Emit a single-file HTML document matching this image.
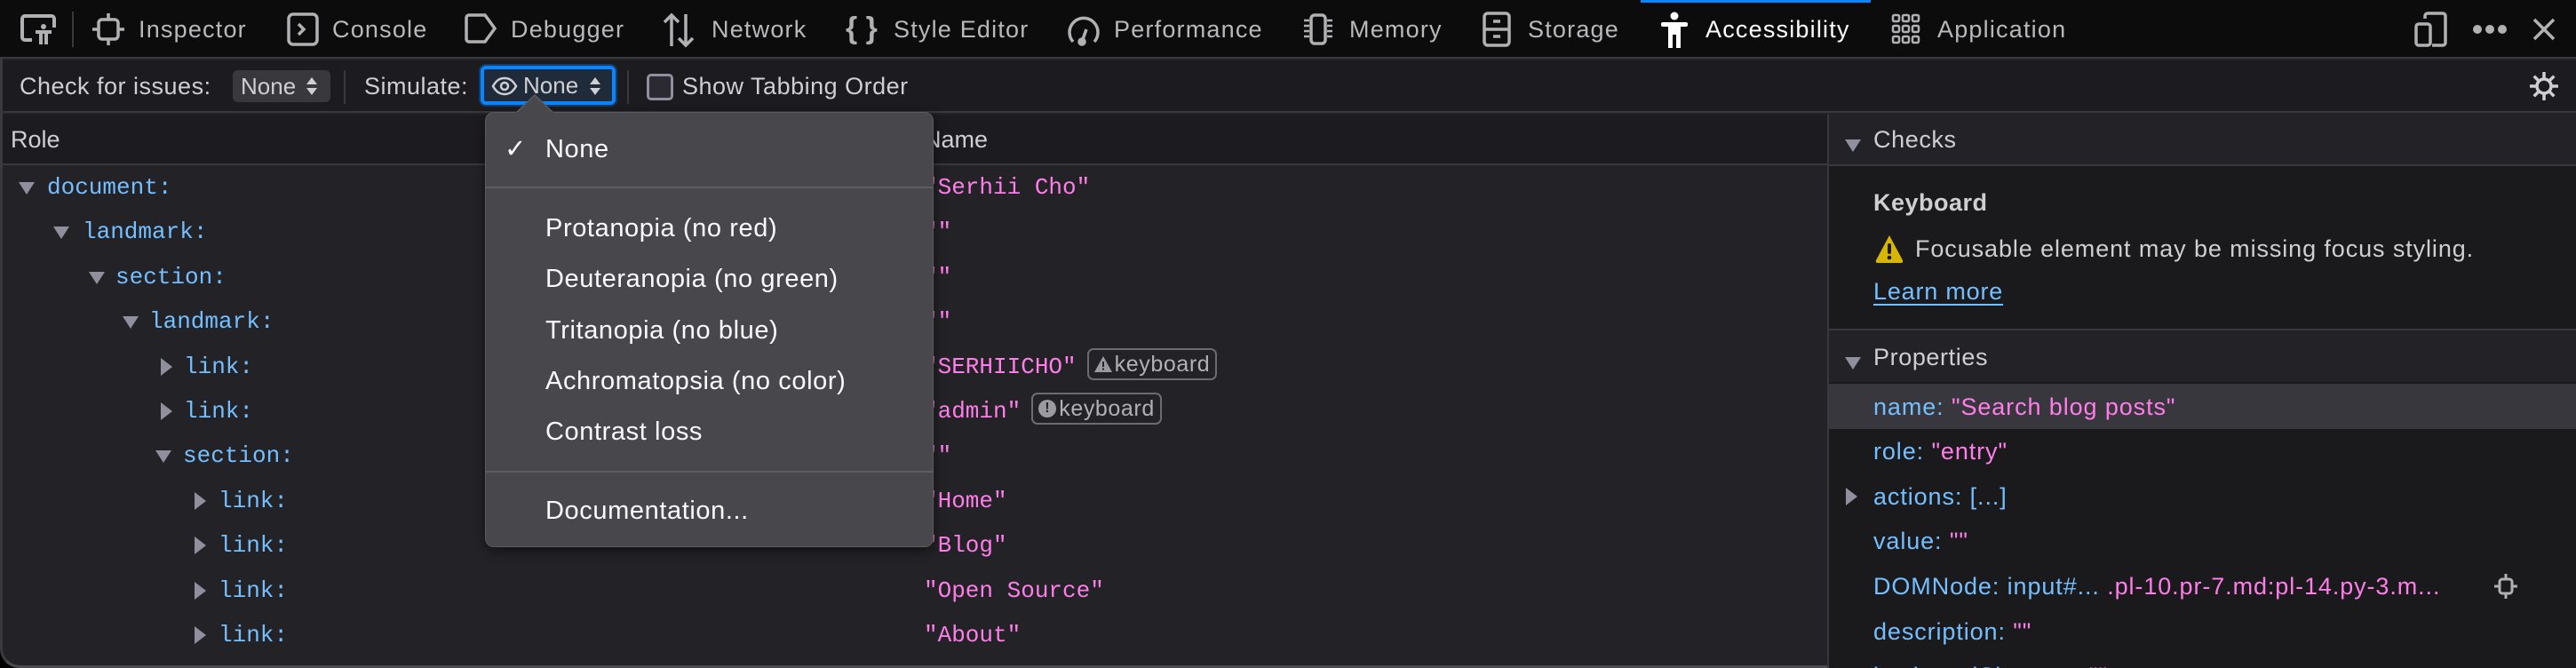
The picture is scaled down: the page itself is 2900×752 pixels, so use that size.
<!DOCTYPE html>
<html><head><meta charset="utf-8"><style>
*{margin:0;padding:0;box-sizing:border-box}
html,body{width:2900px;height:752px;overflow:hidden;background:#000}
body{position:relative;font-family:"Liberation Sans",sans-serif;color:#b1b1b3}
.a{position:absolute;white-space:nowrap}
.t{font-size:27px;letter-spacing:1.2px;line-height:66px;top:0;color:#b9b9bc}
.ic{position:absolute}
.mono{font-family:"Liberation Mono",monospace;font-size:26px}
.blue{color:#75bfff}.pink{color:#ff7de9}
.row{position:absolute;height:50px;line-height:50px;white-space:nowrap}
.dn{position:absolute;width:0;height:0;border-left:9px solid transparent;border-right:9px solid transparent;border-top:14px solid #8f8f9d;margin-top:19px}
.rt{position:absolute;width:0;height:0;border-top:10px solid transparent;border-bottom:10px solid transparent;border-left:13px solid #8f8f9d;margin-top:15px}
.badge{display:inline-block;border:2px solid #6b6b70;border-radius:7px;height:36px;line-height:32px;padding:0 6px 0 6px;font-family:"Liberation Sans",sans-serif;font-size:25px;letter-spacing:0.6px;color:#b1b1b3;vertical-align:middle;margin-left:12px;position:relative;top:-3px}
.mi{position:absolute;left:614px;font-size:29px;letter-spacing:0.6px;color:#fbfbfe;line-height:40px}
.pr{position:absolute;left:2109px;font-size:27px;letter-spacing:0.9px;line-height:50px;white-space:nowrap}
</style></head><body>
<div class="a" style="left:0;top:0;width:2900px;height:752px;background:#232327;border-left:3px solid #3a3a3e;border-bottom:3px solid #4a4a4f;border-radius:0 0 22px 22px;overflow:hidden">
</div>
<!-- tab bar -->
<div class="a" style="left:0;top:0;width:2900px;height:66px;background:#0c0c0d;border-bottom:2px solid #38383d"></div>
<div class="a" style="left:1847px;top:0;width:259px;height:3px;background:#0a84ff"></div>
<svg class="ic" style="left:22px;top:15px" width="42" height="36" viewBox="0 0 42 36" fill="none" stroke="#b1b1b3" stroke-width="4"><path d="M14 30H6a3 3 0 0 1-3-3V6a3 3 0 0 1 3-3h30a3 3 0 0 1 3 3v10"/><circle cx="27" cy="15" r="3" fill="#b1b1b3" stroke="none"/><path d="M18 21h18M24 21v14M30 21v14" stroke-width="4"/></svg>
<div class="a" style="left:81px;top:13px;width:2px;height:40px;background:#38383d"></div>
<svg class="ic" style="left:102px;top:13px" width="40" height="40" viewBox="0 0 40 40" fill="none" stroke="#b1b1b3" stroke-width="3.5"><rect x="9" y="9" width="22" height="22" rx="4"/><path d="M20 2v7M20 31v7M2 20h7M31 20h7"/></svg>
<div class="a t" style="left:156px">Inspector</div>
<svg class="ic" style="left:323px;top:14px" width="36" height="38" viewBox="0 0 36 38" fill="none" stroke="#b1b1b3" stroke-width="3.5"><rect x="2" y="2" width="32" height="34" rx="5"/><path d="M13 13l6 6-6 6"/></svg>
<div class="a t" style="left:374px">Console</div>
<svg class="ic" style="left:522px;top:15px" width="38" height="34" viewBox="0 0 38 34" fill="none" stroke="#b1b1b3" stroke-width="3.5"><path d="M3 5a3 3 0 0 1 3-3h18l11 15-11 15H6a3 3 0 0 1-3-3z"/></svg>
<div class="a t" style="left:575px">Debugger</div>
<svg class="ic" style="left:746px;top:14px" width="36" height="40" viewBox="0 0 36 40" fill="none" stroke="#b1b1b3" stroke-width="3.5"><path d="M10 38V3M2 11l8-8 8 8M26 2v35M18 29l8 8 8-8"/></svg>
<div class="a t" style="left:801px">Network</div>
<div class="a" style="left:952px;top:0;line-height:64px;font-size:34px;color:#b1b1b3;font-weight:bold">{ }</div>
<div class="a t" style="left:1006px">Style Editor</div>
<svg class="ic" style="left:1200px;top:13px" width="40" height="40" viewBox="0 0 40 40" fill="none" stroke="#b1b1b3" stroke-width="3.5"><path d="M8 34A16 16 0 1 1 32 34"/><path d="M18 34l5-14"/><circle cx="18" cy="34" r="3" fill="#b1b1b3"/></svg>
<div class="a t" style="left:1254px">Performance</div>
<svg class="ic" style="left:1465px;top:14px" width="38" height="38" viewBox="0 0 38 38" fill="none" stroke="#b1b1b3" stroke-width="3.5"><rect x="11" y="3" width="16" height="32" rx="4"/><path d="M3 9h6M3 15h6M3 21h6M3 27h6M29 9h6M29 15h6M29 21h6M29 27h6" stroke-width="2.5"/></svg>
<div class="a t" style="left:1519px">Memory</div>
<svg class="ic" style="left:1668px;top:13px" width="34" height="40" viewBox="0 0 34 40" fill="none" stroke="#b1b1b3" stroke-width="3.5"><rect x="3" y="2" width="28" height="36" rx="4"/><path d="M3 20h28M13 11h8M13 28h8"/></svg>
<div class="a t" style="left:1720px">Storage</div>
<svg class="ic" style="left:1868px;top:13px" width="34" height="42" viewBox="0 0 34 42" fill="#fff"><circle cx="17" cy="5" r="4.5"/><rect x="2" y="12" width="30" height="5" rx="2"/><rect x="10" y="12" width="14" height="14"/><rect x="10" y="24" width="5" height="17"/><rect x="19" y="24" width="5" height="17"/></svg>
<div class="a t" style="left:1920px;color:#fff">Accessibility</div>
<svg class="ic" style="left:2129px;top:15px" width="34" height="36" viewBox="0 0 34 36" fill="none" stroke="#b1b1b3" stroke-width="2.5"><rect x="2" y="2" width="7" height="7" rx="1.5"/><rect x="13" y="2" width="7" height="7" rx="1.5"/><rect x="24" y="2" width="7" height="7" rx="1.5"/><rect x="2" y="14" width="7" height="7" rx="1.5"/><rect x="13" y="14" width="7" height="7" rx="1.5"/><rect x="24" y="14" width="7" height="7" rx="1.5"/><rect x="2" y="26" width="7" height="7" rx="1.5"/><rect x="13" y="26" width="7" height="7" rx="1.5"/><rect x="24" y="26" width="7" height="7" rx="1.5"/></svg>
<div class="a t" style="left:2181px">Application</div>
<svg class="ic" style="left:2718px;top:13px" width="38" height="40" viewBox="0 0 38 40" fill="none" stroke="#b1b1b3" stroke-width="3.5"><path d="M12 8V5a3 3 0 0 1 3-3h17a3 3 0 0 1 3 3v30a3 3 0 0 1-3 3H20"/><rect x="2" y="14" width="16" height="24" rx="3"/></svg>
<svg class="ic" style="left:2783px;top:27px" width="40" height="12" viewBox="0 0 40 12" fill="#b1b1b3"><circle cx="6" cy="6" r="5"/><circle cx="20" cy="6" r="5"/><circle cx="34" cy="6" r="5"/></svg>
<svg class="ic" style="left:2850px;top:19px" width="28" height="28" viewBox="0 0 28 28" stroke="#b1b1b3" stroke-width="3.5"><path d="M3 3l22 22M25 3L3 25"/></svg>

<!-- toolbar -->
<div class="a" style="left:3px;top:68px;width:2897px;height:59px;background:#1c1b1f;border-bottom:2px solid #38383d"></div>
<div class="a" style="left:22px;top:68px;line-height:58px;font-size:27px;letter-spacing:0.5px;color:#cfcfd2">Check for issues:</div>
<div class="a" style="left:262px;top:79px;width:110px;height:36px;background:#38383d;border-radius:6px;font-size:26px;line-height:36px;padding-left:9px;color:#cfcfd2">None</div>
<svg class="ic" style="left:344px;top:86px" width="14" height="22" viewBox="0 0 14 22" fill="#cfcfd2"><path d="M7 1l6 8H1zM7 21l6-8H1z"/></svg>
<div class="a" style="left:387px;top:79px;width:2px;height:38px;background:#38383d"></div>
<div class="a" style="left:410px;top:68px;line-height:58px;font-size:27px;letter-spacing:0.5px;color:#cfcfd2">Simulate:</div>
<div class="a" style="left:541px;top:74px;width:152px;height:44px;border:4px solid #0a84ff;border-radius:6px;background:#1f2a3a;box-shadow:0 0 0 2px #153b66"></div>
<svg class="ic" style="left:553px;top:86px" width="30" height="22" viewBox="0 0 30 22" fill="none" stroke="#cfcfd2" stroke-width="2.5"><path d="M2 11C6 4 10 2 15 2s9 2 13 9c-4 7-8 9-13 9S6 18 2 11z"/><circle cx="15" cy="11" r="4"/></svg>
<div class="a" style="left:589px;top:78px;line-height:36px;font-size:26px;color:#cfcfd2">None</div>
<svg class="ic" style="left:663px;top:86px" width="14" height="22" viewBox="0 0 14 22" fill="#cfcfd2"><path d="M7 1l6 8H1zM7 21l6-8H1z"/></svg>
<div class="a" style="left:706px;top:79px;width:2px;height:38px;background:#38383d"></div>
<div class="a" style="left:728px;top:83px;width:30px;height:30px;border:3px solid #8f8f9d;border-radius:5px;background:#2b2a33"></div>
<div class="a" style="left:768px;top:68px;line-height:58px;font-size:27px;letter-spacing:0.5px;color:#cfcfd2">Show Tabbing Order</div>
<svg class="ic" style="left:2846px;top:79px" width="36" height="36" viewBox="0 0 36 36" fill="none" stroke="#cfcfd2" stroke-width="3.5"><circle cx="18" cy="18" r="8"/><path d="M18 2v7M18 27v7M2 18h7M27 18h7M6.7 6.7l5 5M24.3 24.3l5 5M6.7 29.3l5-5M24.3 11.7l5-5"/></svg>

<!-- header row -->
<div class="a" style="left:3px;top:129px;width:2054px;height:57px;background:#1c1b1f;border-bottom:2px solid #38383d"></div>
<div class="a" style="left:12px;top:129px;line-height:56px;font-size:27px;color:#cfcfd2">Role</div>
<div class="a" style="left:1040px;top:129px;line-height:56px;font-size:27px;color:#cfcfd2">Name</div>

<!-- tree rows -->
<div class="dn" style="top:186px;left:21px"></div><div class="row mono blue" style="top:186px;left:53px">document:</div>
<div class="dn" style="top:236px;left:60px"></div><div class="row mono blue" style="top:236px;left:93px">landmark:</div>
<div class="dn" style="top:287px;left:100px"></div><div class="row mono blue" style="top:287px;left:130px">section:</div>
<div class="dn" style="top:337px;left:138px"></div><div class="row mono blue" style="top:337px;left:168px">landmark:</div>
<div class="rt" style="top:388px;left:181px"></div><div class="row mono blue" style="top:388px;left:207px">link:</div>
<div class="rt" style="top:438px;left:181px"></div><div class="row mono blue" style="top:438px;left:207px">link:</div>
<div class="dn" style="top:488px;left:175px"></div><div class="row mono blue" style="top:488px;left:206px">section:</div>
<div class="rt" style="top:539px;left:219px"></div><div class="row mono blue" style="top:539px;left:246px">link:</div>
<div class="rt" style="top:589px;left:219px"></div><div class="row mono blue" style="top:589px;left:246px">link:</div>
<div class="rt" style="top:640px;left:219px"></div><div class="row mono blue" style="top:640px;left:246px">link:</div>
<div class="rt" style="top:690px;left:219px"></div><div class="row mono blue" style="top:690px;left:246px">link:</div>

<div class="row mono pink" style="top:186px;left:1040px">"Serhii Cho"</div>
<div class="row mono pink" style="top:236px;left:1040px">""</div>
<div class="row mono pink" style="top:287px;left:1040px">""</div>
<div class="row mono pink" style="top:337px;left:1040px">""</div>
<div class="row mono pink" style="top:388px;left:1040px">"SERHIICHO"<span class="badge"><svg width="20" height="18" viewBox="0 0 20 18" style="vertical-align:-1px;margin-right:3px"><path d="M10 0L20 18H0z" fill="#9a9aa0"/><rect x="9" y="6" width="2" height="6" fill="#232327"/><rect x="9" y="13.5" width="2" height="2" fill="#232327"/></svg>keyboard</span></div>
<div class="row mono pink" style="top:438px;left:1040px">"admin"<span class="badge"><span style="display:inline-block;width:20px;height:20px;border-radius:50%;background:#9a9aa0;color:#232327;font-size:16px;line-height:20px;text-align:center;font-weight:bold;vertical-align:middle;position:relative;top:-2px;margin-right:3px">!</span>keyboard</span></div>
<div class="row mono pink" style="top:488px;left:1040px">""</div>
<div class="row mono pink" style="top:539px;left:1040px">"Home"</div>
<div class="row mono pink" style="top:589px;left:1040px">"Blog"</div>
<div class="row mono pink" style="top:640px;left:1040px">"Open Source"</div>
<div class="row mono pink" style="top:690px;left:1040px">"About"</div>

<!-- right panel -->
<div class="a" style="left:2057px;top:129px;width:843px;height:623px;background:#1a1a1d;border-left:2px solid #38383d"></div>
<div class="a" style="left:2059px;top:129px;width:841px;height:58px;background:#232327;border-bottom:2px solid #38383d"></div>
<div class="dn" style="left:2077px;top:138px"></div>
<div class="a" style="left:2109px;top:129px;line-height:56px;font-size:27px;letter-spacing:0.6px;color:#cfcfd2">Checks</div>
<div class="a" style="left:2109px;top:208px;line-height:40px;font-size:27px;letter-spacing:0.5px;font-weight:bold;color:#cfcfd2">Keyboard</div>
<svg class="ic" style="left:2110px;top:263px" width="34" height="34" viewBox="0 0 34 34"><path d="M17 2L32 30a2 2 0 0 1-2 3H4a2 2 0 0 1-2-3z" fill="#d7b600"/><rect x="15" y="11" width="4" height="12" rx="2" fill="#1a1a1d"/><circle cx="17" cy="27" r="2.3" fill="#1a1a1d"/></svg>
<div class="a" style="left:2156px;top:260px;line-height:40px;font-size:27px;letter-spacing:0.9px;color:#cfcfd2">Focusable element may be missing focus styling.</div>
<div class="a" style="left:2109px;top:308px;line-height:40px;font-size:27px;letter-spacing:0.8px;color:#75bfff;text-decoration:underline;text-underline-offset:5px">Learn more</div>
<div class="a" style="left:2059px;top:370px;width:841px;height:60px;background:#232327;border-top:2px solid #38383d"></div>
<div class="dn" style="left:2077px;top:383px"></div>
<div class="a" style="left:2109px;top:374px;line-height:56px;font-size:27px;letter-spacing:0.6px;color:#cfcfd2">Properties</div>
<div class="a" style="left:2059px;top:432px;width:841px;height:51px;background:#38373d"></div>
<div class="pr blue" style="top:433px">name: <span class="pink">"Search blog posts"</span></div>
<div class="pr blue" style="top:483px">role: <span class="pink">"entry"</span></div>
<div class="rt" style="left:2078px;top:534px"></div>
<div class="pr blue" style="top:534px">actions: [...]</div>
<div class="pr blue" style="top:584px">value: <span class="pink">""</span></div>
<div class="pr blue" style="top:635px">DOMNode: input#... <span class="pink">.pl-10.pr-7.md:pl-14.py-3.m...</span></div>
<svg class="ic" style="left:2806px;top:645px" width="30" height="30" viewBox="0 0 30 30" fill="none" stroke="#b1b1b3" stroke-width="3"><rect x="8" y="7" width="14" height="16" rx="3"/><path d="M15 1v6M15 23v6M2 15h6M22 15h6"/></svg>
<div class="pr blue" style="top:686px">description: <span class="pink">""</span></div>
<div class="pr blue" style="top:736px">keyboardShortcut: <span class="pink">""</span></div>

<!-- menu -->
<div class="a" style="left:546px;top:126px;width:505px;height:490px;background:#48474c;border:1px solid #5b5b60;border-radius:10px;box-shadow:0 4px 12px rgba(0,0,0,.5)"></div>
<svg class="ic" style="left:580px;top:106px" width="44" height="22" viewBox="0 0 44 22"><path d="M0 22L22 1 44 22z" fill="#48474c" stroke="#5b5b60" stroke-width="1.5"/><rect x="0" y="20" width="44" height="4" fill="#48474c"/></svg>
<div class="mi" style="left:568px;top:148px">&#10003;</div>
<div class="mi" style="top:148px">None</div>
<div class="a" style="left:547px;top:210px;width:503px;height:2px;background:#5e5d62"></div>
<div class="mi" style="top:237px">Protanopia (no red)</div>
<div class="mi" style="top:294px">Deuteranopia (no green)</div>
<div class="mi" style="top:352px">Tritanopia (no blue)</div>
<div class="mi" style="top:409px">Achromatopsia (no color)</div>
<div class="mi" style="top:466px">Contrast loss</div>
<div class="a" style="left:547px;top:530px;width:503px;height:2px;background:#5e5d62"></div>
<div class="mi" style="top:555px">Documentation...</div>
</body></html>
